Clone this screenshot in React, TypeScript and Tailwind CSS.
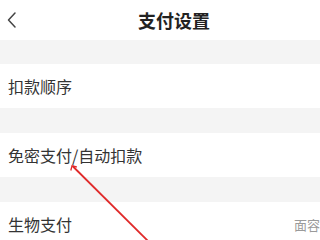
import React from "react";

const font = { fontFamily: '"Noto Sans CJK SC", "Noto Sans", sans-serif' };

function Row({ label, right }: { label: string; right?: string }) {
  return (
    <div className="flex h-11 items-center justify-between bg-white pl-2">
      <span className="text-[16px] leading-none text-[#333333]">{label}</span>
      {right && (
        <span className="whitespace-nowrap text-[13px] leading-none text-[#9a9a9a]">{right}</span>
      )}
    </div>
  );
}

export default function App() {
  return (
    <div className="relative h-[240px] w-[320px] overflow-hidden bg-white" style={font}>
      <div className="flex h-10 items-center bg-white">
        <svg width="24" height="40" viewBox="0 0 24 40" className="shrink-0">
          <path d="M15 13 L8.5 20 L15 27" fill="none" stroke="#444" strokeWidth="1.5" strokeLinecap="round" strokeLinejoin="round" />
        </svg>
        <div className="flex flex-1 justify-center pl-[4px]">
          <span className="text-[18px] font-semibold leading-none text-[#222222]">支付设置</span>
        </div>
      </div>
      <div className="h-6 bg-[#f4f4f4]" />
      <Row label="扣款顺序" />
      <div className="h-[25px] bg-[#f4f4f4]" />
      <Row label="免密支付/自动扣款" />
      <div className="h-[25px] bg-[#f4f4f4]" />
      <Row label="生物支付" right="面容" />
      <svg className="absolute left-0 top-0" width="320" height="240" viewBox="0 0 320 240">
        <line x1="72.5" y1="166" x2="150" y2="243" stroke="#e02a2a" strokeWidth="1.8" />
        <path d="M70.8 170.5 L72 165.8 L76.8 167" fill="none" stroke="#e02a2a" strokeWidth="1.3" />
      </svg>
    </div>
  );
}
